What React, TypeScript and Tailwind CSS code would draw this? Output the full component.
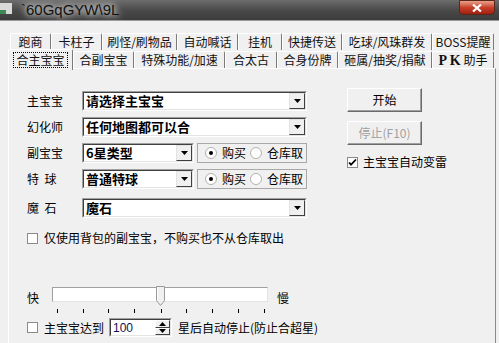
import React from "react";

const FONT = '"Noto Sans CJK SC", "Noto Sans", sans-serif';

const tabs1: [string, number][] = [
  ["跑商", 41],
  ["卡柱子", 51],
  ["刷怪/刷物品", 75],
  ["自动喊话", 61],
  ["挂机", 44],
  ["快捷传送", 60],
  ["吃球/风珠群发", 90],
  ["BOSS提醒", 62],
];
const tabs2: [string, number][] = [
  ["合主宝宝", 65],
  ["合副宝宝", 61],
  ["特殊功能/加速", 91],
  ["合太古", 52],
  ["合身份牌", 61],
  ["砸属/抽奖/捐献", 94],
  ["PK助手", 62],
];

function Tab({ label, w, selected }: { label: string; w: number; selected?: boolean }) {
  const content =
    label === "PK助手" ? (
      <span>
        <span className="font-bold" style={{ fontFamily: '"Liberation Serif", serif', fontSize: 14 }}>P K</span> 助手
      </span>
    ) : (
      label
    );
  return (
    <div
      style={{ width: w }}
      className={
        "shrink-0 flex items-center justify-center border-l border-t border-l-white border-t-white border-r border-r-[#7a7a7a] rounded-tl-[2px] rounded-tr-[2px] bg-[#f0f0f0] text-[12px] text-[#111] whitespace-nowrap " +
        (selected ? "h-[21px] -mb-[2px] relative z-10" : "h-[17px]")
      }
    >
      {selected ? (
        <span className="border border-dotted border-black px-[2px] leading-[14px]">{content}</span>
      ) : (
        <span className="leading-[14px]">{content}</span>
      )}
    </div>
  );
}

function Combo({ text, w }: { text: string; w: number }) {
  return (
    <div
      style={{ width: w }}
      className="shrink-0 h-[20px] border border-t-[#a0a0a0] border-l-[#a0a0a0] border-r-white border-b-white"
    >
      <div className="h-full border border-t-[#404040] border-l-[#404040] border-r-[#e3e3e3] border-b-[#e3e3e3] bg-white flex items-center">
        <span className="flex-1 pl-[2px] text-[13px] font-bold text-black leading-[16px] whitespace-nowrap">{text}</span>
        <div className="shrink-0 w-[16px] h-[16px] bg-[#f0f0f0] border border-t-[#e3e3e3] border-l-[#e3e3e3] border-r-[#404040] border-b-[#404040] flex items-center justify-center">
          <svg width="7" height="4" viewBox="0 0 7 4">
            <path d="M0 0h7L3.5 4z" fill="#000" />
          </svg>
        </div>
      </div>
    </div>
  );
}

function Radio({ on }: { on?: boolean }) {
  return (
    <svg className="shrink-0" width="12" height="12" viewBox="0 0 12 12">
      <circle cx="6" cy="6" r="5.5" fill="#fff" stroke="#b0b0b0" />
      {on && <circle cx="6" cy="6" r="2" fill="#000" />}
    </svg>
  );
}

function RadioGroup() {
  return (
    <div className="shrink-0 ml-[3px] w-[110px] h-[20px] border border-[#a8a8a8] flex items-center pl-[7px] text-[12px] text-black leading-[14px] whitespace-nowrap">
      <Radio on />
      <span className="ml-[5px]">购买</span>
      <span className="ml-[4px] flex"><Radio /></span>
      <span className="ml-[5px]">仓库取</span>
    </div>
  );
}

function Check({ on }: { on?: boolean }) {
  return (
    <div className="shrink-0 w-[11px] h-[11px] bg-white border border-[#8a8a8a] flex items-center justify-center">
      {on && (
        <svg width="9" height="9" viewBox="0 0 9 9">
          <path d="M1 4.5l2 2.2L8 1.5" stroke="#000" strokeWidth="1.8" fill="none" />
        </svg>
      )}
    </div>
  );
}

function Label({ children }: { children: React.ReactNode }) {
  return <div className="shrink-0 w-[55px] text-[12px] text-black leading-[14px] whitespace-pre">{children}</div>;
}

export default function App() {
  const ticks = [57, 83, 108, 134, 161, 186, 212, 238, 264];
  return (
    <div className="w-[499px] h-[343px] bg-[#f0f0f0] overflow-hidden" style={{ fontFamily: FONT }}>
      {/* Title bar */}
      <div className="h-[20px] bg-gradient-to-b from-[#6e6e6e] via-[#4a4a4a] to-[#3c3c3c] flex items-start relative">
        <div className="w-[12px] h-[11px] mt-[3px] bg-[#d9d9d9] flex flex-col justify-end">
          <div className="h-[4px] w-[6px] bg-[#3c8a55]" />
        </div>
        <div
          className="ml-[9px] mt-[1px] text-[15px] leading-[17px] text-[#111] [text-shadow:0_0_6px_#fff,0_0_10px_#ddd]"
          style={{ fontFamily: '"Liberation Sans", sans-serif' }}
        >
          `60GqGYW\9L
        </div>
        <div className="flex-1" />
        <div className="w-[36px] h-[15px] mr-[4px] rounded-b-[4px] bg-gradient-to-b from-[#e8a08a] via-[#c8402a] to-[#a02010] border border-[#5a2418] flex items-center justify-center">
          <svg width="10" height="8" viewBox="0 0 10 8">
            <path d="M1 0.5l8 7M9 0.5l-8 7" stroke="#fff" strokeWidth="2.2" />
          </svg>
        </div>
      </div>
      <div className="h-[1px] bg-[#9a9a9a]" />
      <div className="h-[12px]" />
      {/* tab row 1 */}
      <div className="flex pl-[10px] h-[17px]">
        {tabs1.map(([t, w]) => (
          <Tab key={t} label={t} w={w} />
        ))}
      </div>
      {/* tab row 2 */}
      <div className="flex pl-[8px] h-[18px] items-end">
        {tabs2.map(([t, w], i) => (
          <Tab key={t} label={t} w={w} selected={i === 0} />
        ))}
      </div>
      {/* panel */}
      <div className="ml-[8px] w-[488px] h-[300px] border-l border-t border-l-white border-t-white border-r border-r-[#8a8a8a]">
        <div className="flex">
          <div className="pl-[18px] pt-[22px] w-[300px] shrink-0">
            <div className="flex items-center">
              <Label>主宝宝</Label>
              <Combo text="请选择主宝宝" w={225} />
            </div>
            <div className="flex items-center mt-[6px]">
              <Label>幻化师</Label>
              <Combo text="任何地图都可以合" w={225} />
            </div>
            <div className="flex items-center mt-[6px]">
              <Label>副宝宝</Label>
              <Combo text="6星类型" w={112} />
              <RadioGroup />
            </div>
            <div className="flex items-center mt-[6px]">
              <Label>{"特  球"}</Label>
              <Combo text="普通特球" w={112} />
              <RadioGroup />
            </div>
            <div className="flex items-center mt-[9px]">
              <Label>{"魔  石"}</Label>
              <Combo text="魔石" w={225} />
            </div>
            <div className="flex items-center mt-[13px] text-[12px] leading-[14px] text-black whitespace-nowrap">
              <Check />
              <span className="ml-[6px]">仅使用背包的副宝宝，不购买也不从仓库取出</span>
            </div>
          </div>
          <div className="pl-[38px] pt-[17px]">
            <button className="w-[75px] h-[24px] bg-[#f0f0f0] border border-t-white border-l-white border-r-[#6a6a6a] border-b-[#6a6a6a] shadow-[inset_-1px_-1px_0_#a0a0a0] text-[12px] text-black leading-[14px]">
              开始
            </button>
            <button className="mt-[9px] block w-[75px] h-[24px] bg-[#f0f0f0] border border-t-white border-l-white border-r-[#6a6a6a] border-b-[#6a6a6a] shadow-[inset_-1px_-1px_0_#a0a0a0] text-[12px] text-[#a0a0a0] leading-[14px]">
              停止(F10)
            </button>
            <div className="flex items-center mt-[10px] text-[12px] leading-[14px] text-black whitespace-nowrap">
              <Check on />
              <span className="ml-[5px]">主宝宝自动变雷</span>
            </div>
          </div>
        </div>
        {/* slider */}
        <div className="flex items-start pl-[18px] mt-[42px] text-[12px] leading-[14px] text-black">
          <span className="mt-[4px]">快</span>
          <div className="ml-[13px]">
            <div className="relative w-[216px] h-[15px] bg-white border border-t-[#a0a0a0] border-l-[#a0a0a0] border-r-[#e3e3e3] border-b-[#e3e3e3]">
              <svg className="absolute left-[103px] -top-[2px]" width="10" height="20" viewBox="0 0 10 20">
                <path d="M0.5 0.5h8v14l-4 5l-4-5z" fill="#f0f0f0" stroke="#9a9a9a" />
                <path d="M1.5 1.5v13" stroke="#fff" />
              </svg>
            </div>
            <div className="relative h-[12px]">
              {ticks.map((x) => (
                <div key={x} className="absolute top-[7px] w-[1px] h-[4px] bg-black" style={{ left: x - 52 }} />
              ))}
            </div>
          </div>
          <span className="ml-[9px] mt-[4px]">慢</span>
        </div>
        <div className="flex items-center pl-[18px] mt-[4px] text-[12px] leading-[14px] text-black whitespace-nowrap">
          <Check />
          <span className="ml-[6px]">主宝宝达到</span>
          <div className="shrink-0 ml-[5px] w-[63px] h-[19px] border border-t-[#a0a0a0] border-l-[#a0a0a0] border-r-white border-b-white">
            <div className="h-full bg-white border border-t-[#404040] border-l-[#404040] border-r-[#e3e3e3] border-b-[#e3e3e3] flex items-center">
              <span className="flex-1 pl-[2px] text-[12px] text-[#101050]" style={{ fontFamily: '"Liberation Sans", sans-serif' }}>100</span>
              <div className="w-[15px] h-full flex flex-col bg-[#f0f0f0]">
                <div className="flex-1 border border-t-white border-l-white border-r-[#404040] border-b-[#404040] flex items-center justify-center">
                  <svg width="7" height="4" viewBox="0 0 7 4"><path d="M3.5 0L7 4H0z" fill="#000" /></svg>
                </div>
                <div className="flex-1 border border-t-white border-l-white border-r-[#404040] border-b-[#404040] flex items-center justify-center">
                  <svg width="7" height="4" viewBox="0 0 7 4"><path d="M0 0h7L3.5 4z" fill="#000" /></svg>
                </div>
              </div>
            </div>
          </div>
          <span className="ml-[6px]">星后自动停止(防止合超星)</span>
        </div>
      </div>
    </div>
  );
}
